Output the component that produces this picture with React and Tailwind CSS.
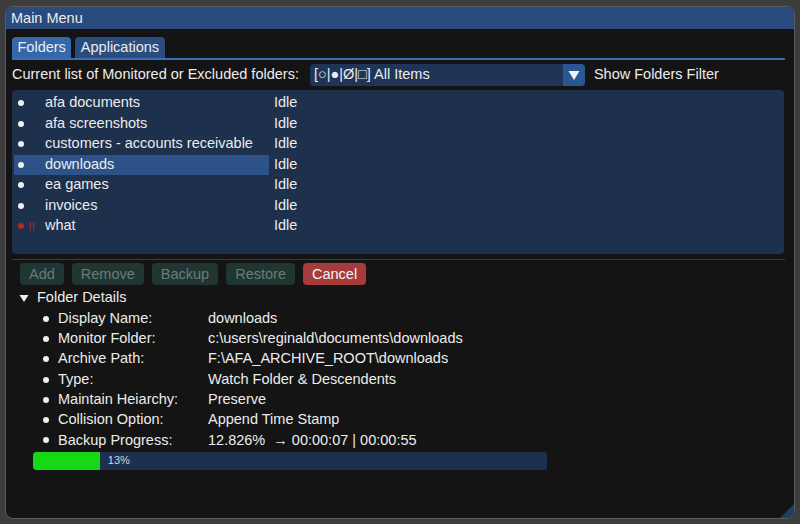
import React from 'react';

const folders = [
  { name: 'afa documents', status: 'Idle' },
  { name: 'afa screenshots', status: 'Idle' },
  { name: 'customers - accounts receivable', status: 'Idle' },
  { name: 'downloads', status: 'Idle', selected: true },
  { name: 'ea games', status: 'Idle' },
  { name: 'invoices', status: 'Idle' },
  { name: 'what', status: 'Idle', error: true },
];

const details = [
  ['Display Name:', 'downloads'],
  ['Monitor Folder:', 'c:\\users\\reginald\\documents\\downloads'],
  ['Archive Path:', 'F:\\AFA_ARCHIVE_ROOT\\downloads'],
  ['Type:', 'Watch Folder & Descendents'],
  ['Maintain Heiarchy:', 'Preserve'],
  ['Collision Option:', 'Append Time Stamp'],
  ['Backup Progress:', '12.826%  \u2192 00:00:07 | 00:00:55'],
];

const Bullet = ({ red }) => (
  <span className={`inline-block w-[6px] h-[6px] rounded-full ${red ? 'bg-[#b02a2a]' : 'bg-[#f0f0f0]'}`} />
);

const FolderRow = ({ f }) => (
  <div className="flex items-center h-[20.5px]">
    <div className={`flex items-center w-[255px] h-full ${f.selected ? 'bg-[#2d5287]' : ''}`}>
      <div className="w-[31px] flex items-center pl-[4px]">
        <Bullet red={f.error} />
        {f.error && <span className="ml-[4px] text-[#b02a2a] text-[13px] leading-none">!!</span>}
      </div>
      <span>{f.name}</span>
    </div>
    <span className="ml-[5px]">{f.status}</span>
  </div>
);

const DisabledButton = ({ children }) => (
  <button className="h-[22px] px-[9px] rounded-[4px] bg-[#1f3632] text-[#6a7c77] leading-none">
    {children}
  </button>
);

const App = () => {
  const progress = 13;
  return (
    <div
      className="w-[800px] h-[524px] bg-[#3d3d3d] pt-[6px] pl-[5px] pr-[5px] pb-[5px] text-[14.5px] text-[#ececec]"
      style={{ fontFamily: '"Liberation Sans", Arial, sans-serif' }}
    >
      <div className="relative h-full flex flex-col rounded-[8px] overflow-hidden border border-[#5c5c5c] bg-[#141414]">
        {/* Title bar */}
        <div className="h-[22px] shrink-0 bg-[#294b7d] flex items-center px-[5px] pt-[1px]">
          <span>Main Menu</span>
        </div>

        <div className="flex-1 flex flex-col px-[6px] pt-[8px]">
          {/* Tabs */}
          <div className="flex gap-[4px] h-[21px]">
            <div className="px-[5.5px] rounded-t-[4px] bg-[#3468aa] flex items-center">Folders</div>
            <div className="px-[5.5px] rounded-t-[4px] bg-[#2a4d80] flex items-center">Applications</div>
          </div>
          <div className="h-[2px] bg-[#3d6bb0] mr-[3px]" />

          {/* Filter row */}
          <div className="flex items-center mt-[4px] h-[22px]">
            <span>Current list of Monitored or Excluded folders:</span>
            <div className="ml-[11px] w-[275px] h-[22px] rounded-[4px] bg-[#1f3558] flex items-center overflow-hidden">
              <span className="flex-1 pl-[4px]">[○|●|Ø|□] All Items</span>
              <div className="w-[22px] h-full bg-[#2c5691] flex items-center justify-center">
                <svg width="12" height="11" viewBox="0 0 12 11">
                  <path d="M0.5 1 L11.5 1 L6 10 Z" fill="#f2f2f2" />
                </svg>
              </div>
            </div>
            <span className="ml-[9px]">Show Folders Filter</span>
          </div>

          {/* Folder list */}
          <div className="mt-[4px] h-[164px] mr-[4px] rounded-[4px] bg-[#1d304c] pt-[3px] pl-[2px]">
            {folders.map((f) => (
              <FolderRow key={f.name} f={f} />
            ))}
          </div>

          <div className="h-[1px] bg-[#3b3b3b] mt-[5px] mr-[3px]" />

          {/* Buttons */}
          <div className="flex gap-[8px] pl-[8px] mt-[3px]">
            <DisabledButton>Add</DisabledButton>
            <DisabledButton>Remove</DisabledButton>
            <DisabledButton>Backup</DisabledButton>
            <DisabledButton>Restore</DisabledButton>
            <button className="h-[22px] px-[9px] rounded-[4px] bg-[#a63b3b] text-[#f4f4f4] leading-none">Cancel</button>
          </div>

          {/* Folder details */}
          <div className="flex items-center h-[20.5px] mt-[3px] pl-[7px]">
            <svg width="10" height="9" viewBox="0 0 10 9" className="mr-[14px]">
              <path d="M0.5 1 L9.5 1 L5 8 Z" fill="#ececec" />
            </svg>
            <span className="-ml-[6px]">Folder Details</span>
          </div>
          <div className="pl-[31px]">
            {details.map(([label, value]) => (
              <div key={label} className="flex items-center h-[20.3px]">
                <Bullet />
                <span className="ml-[9px] w-[150px]">{label}</span>
                <span className="whitespace-pre">{value}</span>
              </div>
            ))}
          </div>

          {/* Progress bar */}
          <div className="mt-[1px] ml-[21px] w-[514px] h-[18px] rounded-[3px] bg-[#1d304f] flex items-center overflow-hidden">
            <div className="h-full bg-[#14d914] rounded-l-[3px]" style={{ width: `${progress}%` }} />
            <span className="ml-[8px] text-[11px] text-[#d8d8d8]">{progress}%</span>
          </div>
        </div>

        {/* Resize grip */}
        <svg width="14" height="14" viewBox="0 0 14 14" className="absolute right-0 bottom-0">
          <path d="M14 0 L14 14 L0 14 Z" fill="#223f63" />
        </svg>
      </div>
    </div>
  );
};

export default App;
